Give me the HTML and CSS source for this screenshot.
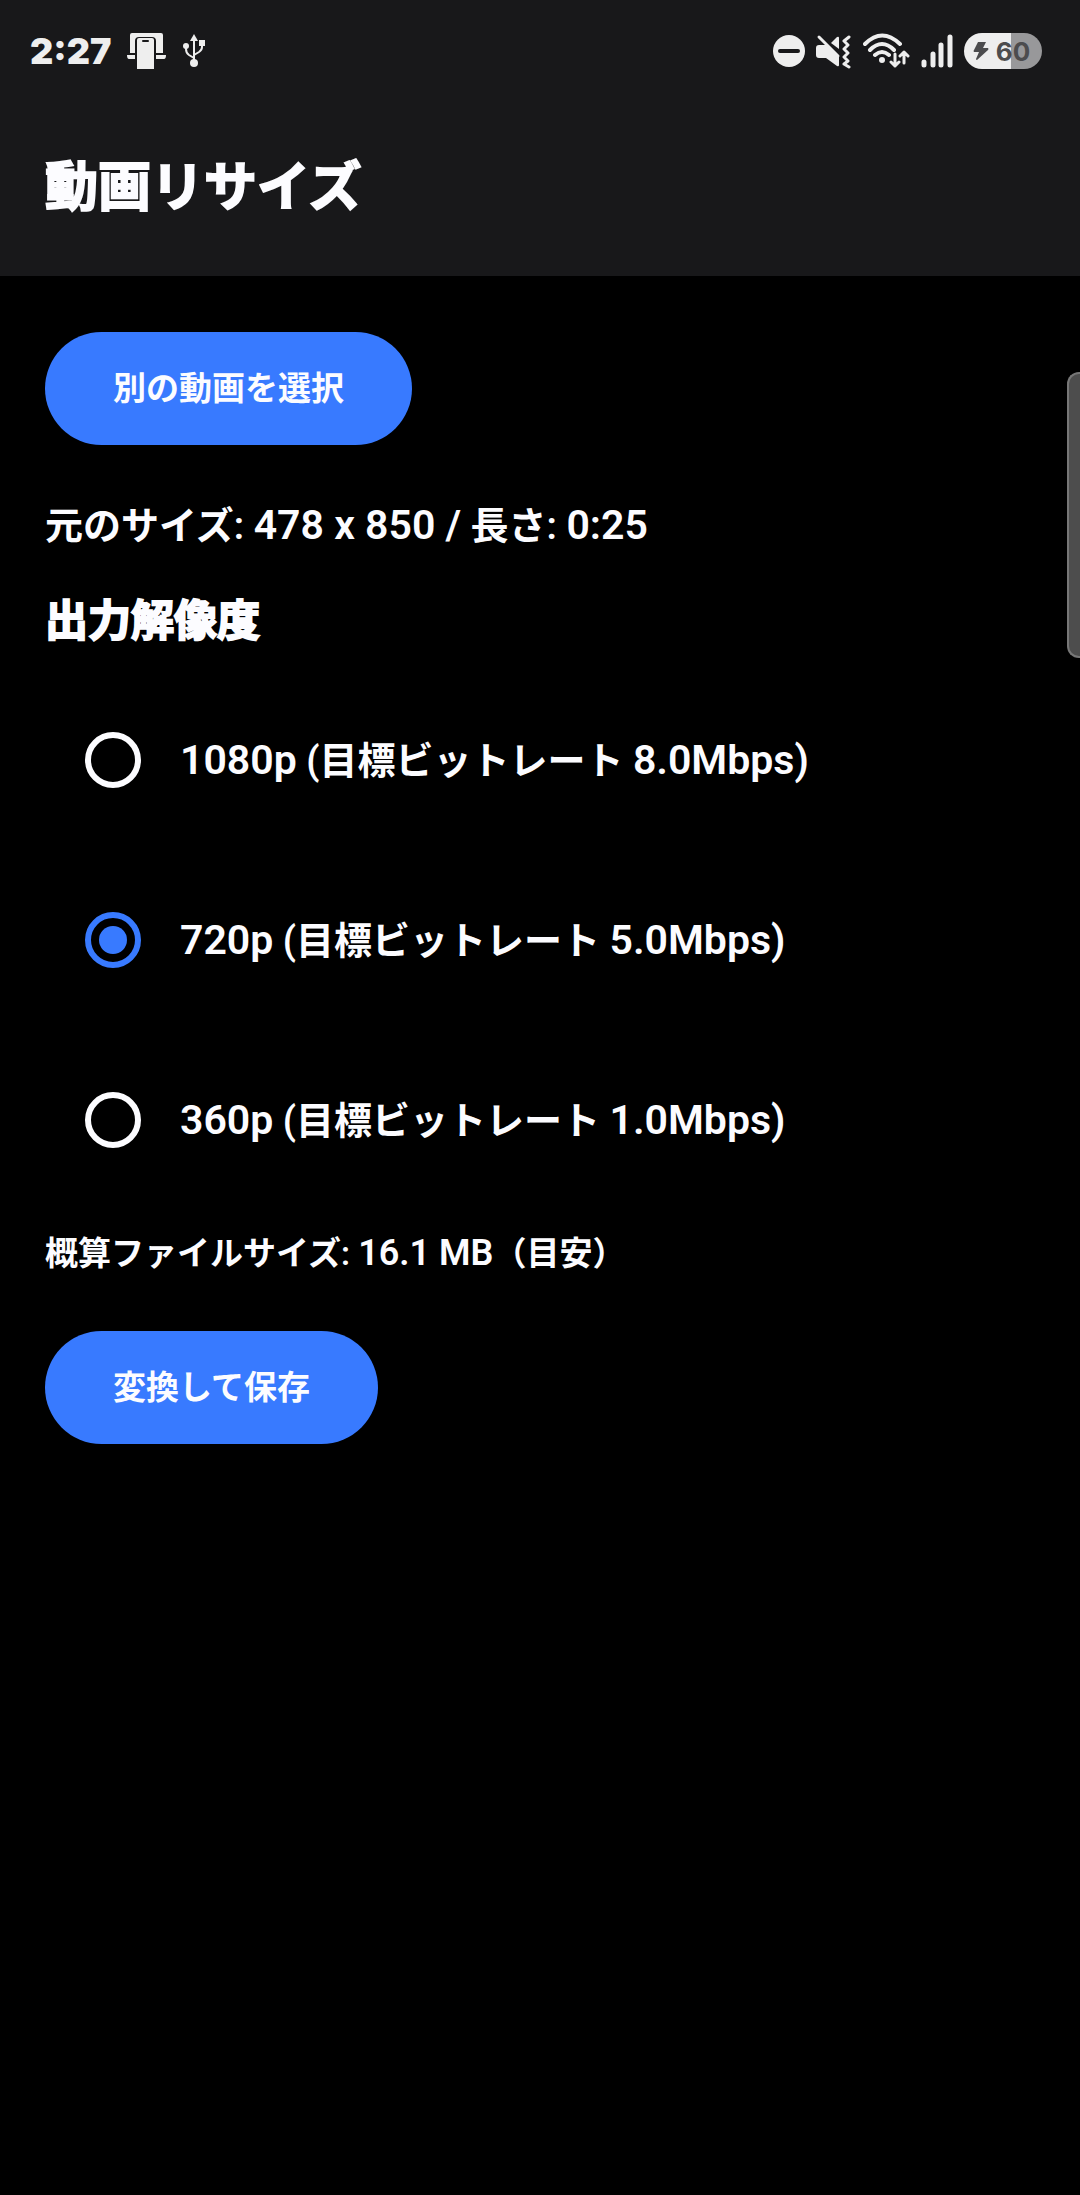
FILE: index.html
```html
<!DOCTYPE html>
<html lang="ja">
<head>
    <meta charset="UTF-8">
    <meta name="viewport" content="width=device-width, initial-scale=1">
    <title>動画リサイズ</title>
    <link rel="stylesheet" href="styles.css">
</head>
<body>
<header class="app-bar">
    <div class="status-bar">
        <div class="status-left">
            <span class="clock">2:27</span>
            <svg width="39" height="38" viewBox="0 0 39 38" fill="#eee">
                <path d="M5 1h29a2 2 0 0 1 2 2v18h-7V9q0-4-4-4H12q-4 0-4 4v12H3V3a2 2 0 0 1 2-2z"/>
                <path d="M0 23h8v4H2q-2 0-2-4zM29 23h10q0 4-2 4h-8z"/>
                <path d="M12 6h13q2 0 2 2v29H10V8q0-2 2-2z"/>
                <rect x="15" y="8" width="7" height="2" rx="1" fill="#18181a"/>
            </svg>
            <svg width="24" height="36" viewBox="0 0 24 36" fill="#eee">
                <path d="M12 6v24M4 13v3q0 4 3 6l5 3M20 10v4q0 3-3 5l-5 3" fill="none" stroke="#eee" stroke-width="2"/>
                <path d="M12 1l4 7H8z"/>
                <circle cx="4" cy="13" r="3"/>
                <rect x="17" y="7" width="6" height="6"/>
                <circle cx="12" cy="30" r="4"/>
            </svg>
        </div>
        <div class="status-right">
            <svg width="32" height="36" viewBox="0 0 32 36">
                <circle cx="16" cy="18" r="16" fill="#eee"/>
                <path d="M7 18h18" stroke="#18181a" stroke-width="4" stroke-linecap="round"/>
            </svg>
            <svg width="36" height="36" viewBox="0 0 36 36" fill="#eee">
                <path d="M3 12h7l13 12v8q0 2-2 1L10 25H3q-3 0-3-3v-7q0-3 3-3z"/>
                <path d="M3 4l19 19" stroke="#eee" stroke-width="3" stroke-linecap="round"/>
                <path d="M23 5v11l-8-6 6-6q2-1 2 1z"/>
                <path d="M33 4l-5 4 4 4-4 4 4 4-4 4 4 4-4 3 5 3" fill="none" stroke="#eee" stroke-width="3" stroke-linecap="round" stroke-linejoin="round"/>
            </svg>
            <svg width="47" height="36" viewBox="0 0 47 36" fill="none" stroke="#eee" stroke-width="4" stroke-linecap="round">
                <path d="M2 11q17-17 35 0M7 17q12-12 24 0M12 22q7-6 14 0"/>
                <circle cx="19" cy="27" r="3" fill="#eee" stroke="none"/>
                <path d="M32 21v12M28 29l4 4 4-4M41 30V19M37 23l4-4 4 4" stroke-width="3" stroke-linejoin="round"/>
            </svg>
            <svg width="32" height="36" viewBox="0 0 32 36" stroke="#eee" stroke-width="5" stroke-linecap="round">
                <path d="M3 29v3M12 21v11M20 12v20M29 4v28"/>
            </svg>
            <span class="battery">
                <svg width="16" height="20" viewBox="0 0 16 20" fill="#4c4c4e">
                    <path d="M5 1h8l-3 6h5q1 1 0 2L4 19q-1 0-1-1l3-7H1q-1-1 0-2z"/>
                </svg>
                60
            </span>
        </div>
    </div>
    <h1 class="title">動画リサイズ</h1>
</header>

<main class="content">
    <button type="button" class="btn">別の動画を選択</button>
    <p class="info">元のサイズ: <span class="value">478 x 850 /</span> 長さ: <span class="value">0:25</span></p>

    <h2 class="subtitle" id="resolution-title">出力解像度</h2>
    <div class="options" role="radiogroup" aria-labelledby="resolution-title">
        <label class="option">
            <input type="radio" name="resolution" value="1080">
            <span><span class="value">1080p</span> (目標ビットレート <span class="value">8.0Mbps)</span></span>
        </label>
        <label class="option">
            <input type="radio" name="resolution" value="720" checked>
            <span><span class="value">720p</span> (目標ビットレート <span class="value">5.0Mbps)</span></span>
        </label>
        <label class="option">
            <input type="radio" name="resolution" value="360">
            <span><span class="value">360p</span> (目標ビットレート <span class="value">1.0Mbps)</span></span>
        </label>
    </div>

    <p class="estimate">概算ファイルサイズ: <span class="size">16.1 MB</span>（目安）</p>
    <button type="button" class="btn">変換して保存</button>
</main>

<div class="edge-handle"></div>
</body>
</html>
```
FILE: styles.css
```css
* {
    box-sizing: border-box;
}
body {
    margin: 0;
    min-height: 100vh;
    background: #000;
    color: #fcfcff;
    font-family: Roboto, "Noto Sans CJK JP", sans-serif;
    font-weight: 600;
}

/* Header */
.app-bar {
    background: #18181a;
    padding-bottom: 49px;
}
.status-bar {
    display: flex;
    justify-content: space-between;
    align-items: center;
    height: 102px;
    padding: 0 38px 0 30px;
    color: #eee;
}
.status-left,
.status-right {
    display: flex;
    align-items: center;
}
.status-left {
    gap: 16px;
}
.status-right {
    gap: 11px;
}
.clock {
    font-family: Inter, sans-serif;
    font-size: 36px;
    font-weight: 900;
}
.battery {
    display: flex;
    align-items: center;
    justify-content: center;
    gap: 7px;
    width: 78px;
    height: 36px;
    padding-right: 3px;
    border-radius: 18px;
    background: linear-gradient(to right, #eee 60%, #98989a 60%);
    color: #4c4c4e;
    font-family: Inter, sans-serif;
    font-size: 26px;
    font-weight: 700;
}
.title {
    margin: 0;
    padding: 47px 45px 0;
    font-size: 53px;
    line-height: 78px;
    -webkit-text-stroke: 2px;
}

/* Content */
.content {
    padding: 56px 45px;
}
.btn {
    display: block;
    height: 113px;
    padding: 0 68px;
    border: none;
    border-radius: 57px;
    background: #387aff;
    color: inherit;
    font-family: inherit;
    font-size: 33px;
    font-weight: 700;
    line-height: 50px;
    cursor: pointer;
}
.info {
    margin: 51px 0 34px;
    font-size: 38px;
    line-height: 58px;
}
.value {
    font-size: 41px;
}
.subtitle {
    margin: 0 0 17px;
    font-size: 43px;
    line-height: 64px;
    -webkit-text-stroke: 2px;
}
.option {
    display: flex;
    align-items: center;
    gap: 39px;
    height: 180px;
    padding-left: 40px;
    font-size: 38px;
    line-height: 58px;
}
.option input {
    appearance: none;
    display: grid;
    place-items: center;
    width: 56px;
    height: 56px;
    margin: 0;
    border: 6px solid #fcfcff;
    border-radius: 50%;
}
.option input:checked {
    border-color: #387aff;
}
.option input:checked::before {
    content: "";
    width: 28px;
    height: 28px;
    border-radius: 50%;
    background: #387aff;
}
.estimate {
    margin: 18px 0 52px;
    font-size: 33px;
    line-height: 50px;
}
.size {
    font-size: 36px;
}

/* Panel handle at the screen edge */
.edge-handle {
    position: absolute;
    top: 372px;
    right: 0;
    width: 13px;
    height: 286px;
    border: 2px solid #777;
    border-right: none;
    border-radius: 12px 0 0 12px;
    background: #4d4d4d;
}
```
